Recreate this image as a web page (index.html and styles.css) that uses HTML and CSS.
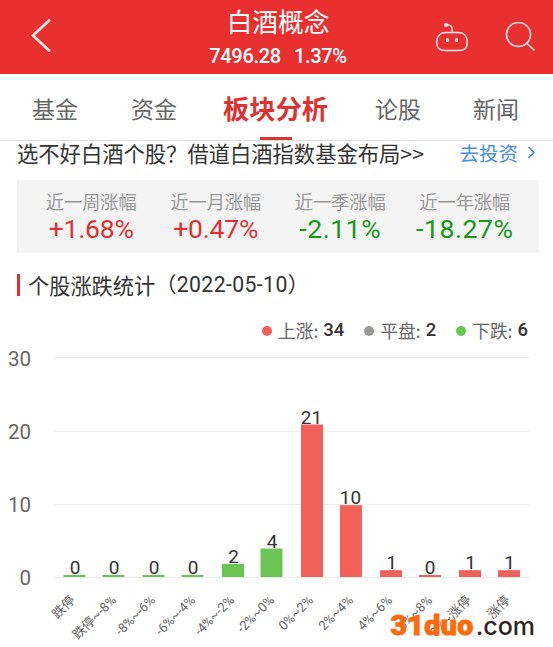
FILE: index.html
```
<!DOCTYPE html>
<html lang="zh-CN">

<head>
    <meta charset="utf-8">
    <meta name="viewport" content="width=device-width, initial-scale=1">
    <title>白酒概念</title>
    <link rel="stylesheet" href="styles.css">
</head>

<body>
    <header class="header">
        <svg class="back" width="20" height="34" viewBox="0 0 20 34">
            <path d="M18 2.500 2 17.500 18 32.500" />
        </svg>
        <div class="title">
            <h1>白酒概念</h1>
            <p><span>7496.28</span><span>1.37%</span></p>
        </div>
        <div class="actions">
            <svg width="34" height="30" viewBox="0 0 34 30">
                <path d="M12 3c4-.5 5.500 2 5.300 6.800M11 10.500h12c6 0 9.300 4 9.300 9.500 0 6-2.300 8.500-9.300 8.500H10.500c-6.500 0-8.800-2.500-8.800-8.500C1.700 14.500 5 10.500 11 10.500z" />
                <circle class="fill" cx="11" cy="3" r="2" />
                <ellipse class="fill" cx="12.500" cy="18" rx="1.600" ry="2" />
                <ellipse class="fill" cx="21.500" cy="18" rx="1.600" ry="2" />
            </svg>
            <svg width="30" height="30" viewBox="0 0 30 30">
                <circle cx="13.500" cy="12.500" r="12" />
                <path d="M21.500 21 29 28" />
            </svg>
        </div>
    </header>

    <nav class="tabs">
        <a>基金</a>
        <a>资金</a>
        <a class="active">板块分析</a>
        <a>论股</a>
        <a>新闻</a>
    </nav>

    <main>
        <div class="promo">
            <p>选不好白酒个股？借道白酒指数基金布局&gt;&gt;</p>
            <a>去投资
                <svg width="9" height="13" viewBox="0 0 9 13">
                    <path d="M1.500 1 7 6.500 1.500 12" />
                </svg>
            </a>
        </div>

        <dl class="stats">
            <div><dt>近一周涨幅</dt><dd class="up">+1.68%</dd></div>
            <div><dt>近一月涨幅</dt><dd class="up">+0.47%</dd></div>
            <div><dt>近一季涨幅</dt><dd class="down">-2.11%</dd></div>
            <div><dt>近一年涨幅</dt><dd class="down">-18.27%</dd></div>
        </dl>

        <h2>个股涨跌统计<span>（2022-05-10）</span></h2>

        <ul class="legend">
            <li class="rise">上涨: <b>34</b></li>
            <li class="flat">平盘: <b>2</b></li>
            <li class="fall">下跌: <b>6</b></li>
        </ul>

        <svg class="chart" width="553" height="303" viewBox="0 344 553 303">
            <g class="grid">
                <path d="M54 357.500H529M54 431.500H529M54 504.500H529M54 577.500H529" />
            </g>
            <g class="axis-y">
                <text x="31" y="366">30</text>
                <text x="31" y="439">20</text>
                <text x="31" y="512">10</text>
                <text x="31" y="585">0</text>
            </g>
            <g class="bar-fall">
                <rect x="63.500" y="575" width="22" height="2" />
                <rect x="102.500" y="575" width="22" height="2" />
                <rect x="142.500" y="575" width="22" height="2" />
                <rect x="181.500" y="575" width="22" height="2" />
                <rect x="222" y="564" width="22" height="13" />
                <rect x="260.500" y="548.500" width="22" height="28.500" />
            </g>
            <g class="bar-rise">
                <rect x="301" y="424.500" width="22" height="152.500" />
                <rect x="340" y="505.200" width="22" height="71.800" />
                <rect x="380" y="570.200" width="22" height="6.800" />
                <rect x="419" y="575" width="22" height="2" />
                <rect x="459" y="570.200" width="22" height="6.800" />
                <rect x="498" y="570.200" width="22" height="6.800" />
            </g>
            <g class="value">
                <text x="75" y="574">0</text>
                <text x="114" y="574">0</text>
                <text x="154" y="574">0</text>
                <text x="193" y="574">0</text>
                <text x="233.500" y="563">2</text>
                <text x="272" y="547.500">4</text>
                <text x="311.500" y="423.500">21</text>
                <text x="350.500" y="504">10</text>
                <text x="391.500" y="569">1</text>
                <text x="430" y="574">0</text>
                <text x="470.500" y="569">1</text>
                <text x="509.500" y="569">1</text>
            </g>
            <g class="axis-x">
                <text transform="translate(76 601) rotate(-45)">跌停</text>
                <text transform="translate(117 601) rotate(-45)">跌停~-8%</text>
                <text transform="translate(156 601) rotate(-45)">-8%~-6%</text>
                <text transform="translate(196 601) rotate(-45)">-6%~-4%</text>
                <text transform="translate(235 601) rotate(-45)">-4%~-2%</text>
                <text transform="translate(275 601) rotate(-45)">-2%~0%</text>
                <text transform="translate(314 601) rotate(-45)">0%~2%</text>
                <text transform="translate(354 601) rotate(-45)">2%~4%</text>
                <text transform="translate(393 601) rotate(-45)">4%~6%</text>
                <text transform="translate(433 601) rotate(-45)">6%~8%</text>
                <text transform="translate(472 601) rotate(-45)">8%~涨停</text>
                <text transform="translate(511 601) rotate(-45)">涨停</text>
            </g>
        </svg>
    </main>

    <div class="watermark"><b>31duo</b><span>.com</span></div>
</body>

</html>
```
FILE: styles.css
```
* {
    box-sizing: border-box;
}

body {
    position: relative;
    margin: 0;
    height: 647px;
    overflow: hidden;
    background-color: #fff;
    color: #333;
    font-family: "Noto Sans CJK SC", sans-serif;
}

h1,
h2,
p,
dl,
dd,
ul {
    margin: 0;
    padding: 0;
    font-weight: normal;
}

.header {
    display: grid;
    grid-template-columns: 124px 1fr 134px;
    height: 74px;
    padding: 0 18px 0 31px;
    background-color: #e93030;
    color: #fff;
}

.header svg {
    fill: none;
    stroke: #ffe9e7;
    stroke-width: 1.5;
    stroke-linecap: round;
}

.header .back {
    margin-top: 18px;
    stroke-width: 2.6;
}

.header .fill {
    fill: #ffe9e7;
    stroke: none;
}

.title {
    padding-top: 5px;
    text-align: center;
}

.title h1 {
    font-size: 25.7px;
    line-height: 32px;
}

.title p {
    display: flex;
    justify-content: center;
    gap: 13px;
    font-family: Roboto, sans-serif;
    font-weight: 500;
    font-size: 20px;
    line-height: 38px;
    letter-spacing: -0.3px;
}

.actions {
    display: flex;
    justify-content: flex-end;
    gap: 36px;
    padding-top: 22px;
}

.tabs {
    display: grid;
    grid-template-columns: 99px 92px 105px 1fr 46px;
    height: 67px;
    padding: 0 34px 0 32px;
    border-bottom: 1px solid #ddd;
    color: #666;
    font-size: 23px;
    line-height: 68px;
    white-space: nowrap;
}

.tabs a:nth-child(4) {
    padding-left: 47px;
}

.tabs .active {
    display: flex;
    flex-direction: column;
    align-items: center;
    color: #e03131;
    font-weight: bold;
    font-size: 26.3px;
}

.tabs .active::after {
    content: "";
    width: 32px;
    height: 3px;
    margin-top: -5px;
    background-color: #dc3535;
}

.promo {
    display: flex;
    justify-content: space-between;
    padding: 0 17px 0 17px;
    font-size: 21.3px;
    line-height: 23px;
}

.promo a {
    display: flex;
    align-items: center;
    gap: 9px;
    color: #4690e8;
    font-size: 19.5px;
}

.promo svg {
    fill: none;
    stroke: #4690e8;
    stroke-width: 1.6;
}

.stats {
    display: grid;
    grid-template-columns: repeat(4, 1fr);
    height: 73px;
    margin: 16px 14px 0 17px;
    padding: 8px 12px 0;
    background-color: #f4f4f4;
    text-align: center;
}

.stats dt {
    color: #999;
    font-size: 18.2px;
    line-height: 27px;
}

.stats dd {
    font-family: Roboto, sans-serif;
    font-size: 26.5px;
    line-height: 28px;
}

.stats .up {
    color: #e03131;
    letter-spacing: -0.2px;
}

.stats .down {
    color: #139a13;
    letter-spacing: 0.6px;
}

h2 {
    display: flex;
    align-items: center;
    height: 24px;
    margin: 20px 0 0 17px;
    font-size: 21.2px;
    line-height: 24px;
}

h2::before {
    content: "";
    width: 3px;
    height: 22px;
    margin-right: 8px;
    background-color: #e03131;
}

h2 span {
    font-family: Roboto, "Noto Sans CJK SC", sans-serif;
    letter-spacing: 0.4px;
}

.legend {
    display: flex;
    justify-content: flex-end;
    gap: 20px;
    margin-top: 20px;
    padding-right: 25px;
    color: #666;
    font-size: 17.7px;
    line-height: 27px;
    list-style: none;
}

.legend li {
    display: flex;
    align-items: center;
    gap: 5px;
}

.legend li::before {
    content: "";
    width: 10px;
    height: 10px;
    margin-right: 1px;
    border-radius: 50%;
}

.legend b {
    color: #333;
    font-family: Roboto, sans-serif;
    font-weight: 500;
    font-size: 18.5px;
}

.rise::before {
    background-color: #ee5f5b;
}

.flat::before {
    background-color: #999;
}

.fall::before {
    background-color: #67c550;
}

.chart {
    display: block;
    overflow: visible;
    font-family: Roboto, "Noto Sans CJK SC", sans-serif;
}

.grid {
    stroke: #ececec;
}

.axis-y {
    fill: #666;
    font-size: 20.5px;
    text-anchor: end;
}

.bar-fall {
    fill: #6bc554;
}

.bar-rise {
    fill: #f2605a;
}

.value {
    fill: #333;
    font-size: 19px;
    text-anchor: middle;
}

.axis-x {
    fill: #666;
    font-size: 13px;
    text-anchor: end;
}

.watermark {
    position: absolute;
    right: 18px;
    bottom: 4px;
    display: flex;
    align-items: baseline;
    color: #2c2421;
    line-height: 34px;
}

.watermark b {
    margin-right: 2px;
    color: #ff6a0a;
    font-family: Roboto, sans-serif;
    font-weight: 900;
    font-size: 28.5px;
    letter-spacing: 0.4px;
    -webkit-text-stroke: 1px #ff6a0a;
}

.watermark span {
    font-family: Inter, sans-serif;
    font-weight: 500;
    font-size: 25px;
}
```
